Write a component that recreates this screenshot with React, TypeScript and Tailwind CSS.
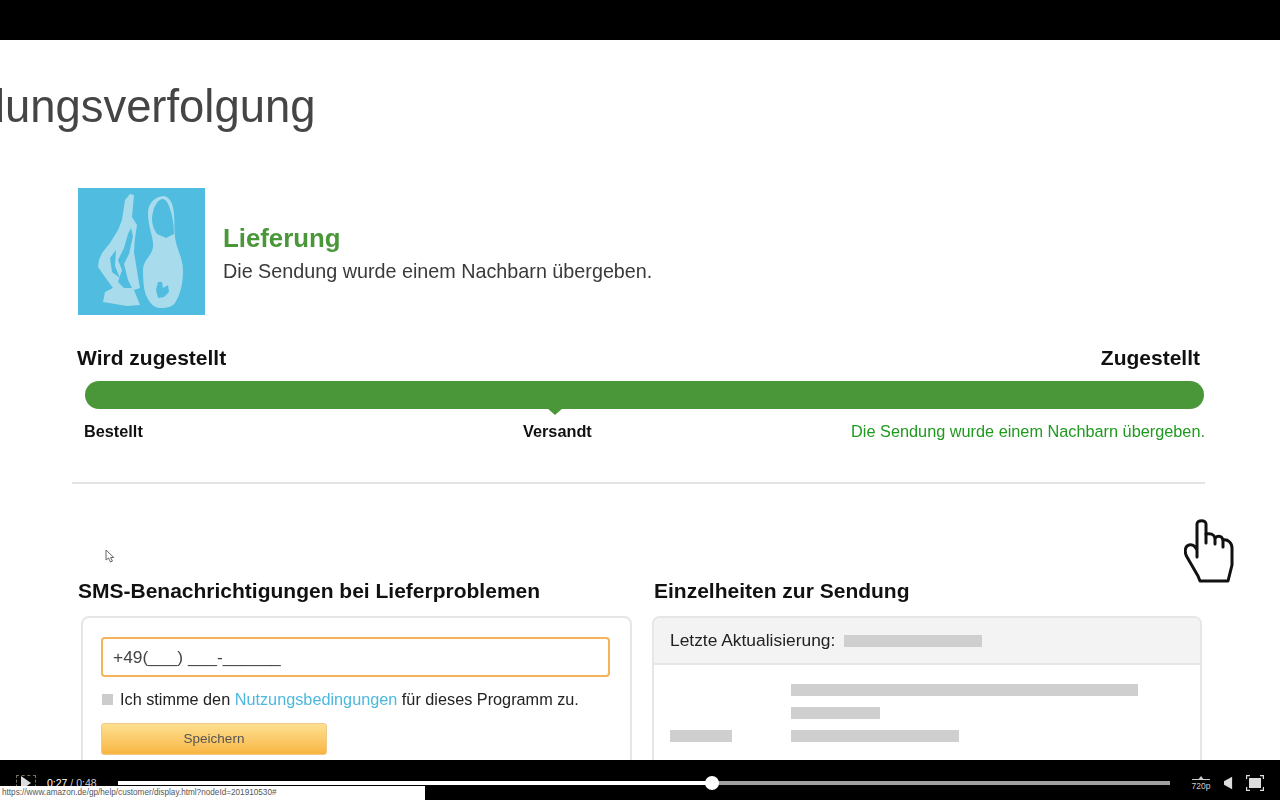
const Bar = ({ className }: { className: string }) => <div className={`h-3 bg-[#cfcfcf] ${className}`} />;

const Shoes = () => (
  <svg viewBox="0 0 127 127" className="h-full w-full">
    <path
      fill="#a8dcec"
      d="M52 6 L56 7 L54 29 L59 37 L57 50 L56 64 L60 89 L62 100 L56 102 L62 117 L49 118 L25 114 L27 104 L35 100 L27 89 L20 79 L21 72 L24 65 L32 55 L40 42 L44 32 L47 12 Z"
    />
    <path
      fill="#4fbce0"
      d="M53 40 L55 48 L51 66 L46 76 L50 92 L54 100 L46 100 L40 94 L44 82 L40 72 L46 60 L50 46 Z M32 70 L38 62 L37 78 L42 90 L34 84 Z"
    />
    <path
      fill="#a8dcec"
      d="M85 8 C76 9 70 16 70 25 C70 40 76 50 75 59 C74 68 65 72 65 82 C65 94 66 104 69 109 C72 116 77 120 82 120 C90 120 95 118 97 115 C103 105 105 95 105 82 C105 70 98 60 97 49 C96 38 97 28 95 19 C93 12 90 8 85 8 Z"
    />
    <path
      fill="#4fbce0"
      d="M84 11 C79 12 75 20 74 30 C74 38 77 43 79 46 L88 50 L96 46 C96 36 94 26 91 18 C89 13 87 11 84 11 Z M80 94 L84 94 L85 100 L90 97 L91 104 L86 109 L80 110 L78 102 Z"
    />
  </svg>
);

const Hand = () => (
  <svg viewBox="0 0 50 66" className="h-[66px] w-[50px]" fill="#fff" stroke="#111" strokeWidth="3" strokeLinejoin="round" strokeLinecap="round">
    <path d="M13 38 L13 5 C13 0.5 22 0.5 22 5 L22 15 C26 14 30 15 31 19 C34 16 38 17 39 21 C44 20 48 24 48 29 L48 46 L44 62 L16 62 L14 57 L3 38 C0 33 1 27 5 26 C8 25 11 27 13 31" />
    <path d="M22 15 L22 24 M31 19 L31 25 M39 21 L39 28" fill="none" />
  </svg>
);

const Cursor = () => (
  <svg viewBox="0 0 10 14" className="h-[14px] w-[10px]" fill="#fff" stroke="#666" strokeWidth="1">
    <path d="M1 1 L1 11 L3.5 9 L5.5 13 L7.5 12 L5.5 8.5 L8.8 8.5 Z" />
  </svg>
);

const Controls = () => (
  <div className="flex h-10 shrink-0 items-center bg-black pl-4 pt-[6px] text-[#cccccc]">
    <div className="flex h-[17px] w-5 shrink-0 items-center justify-center border border-dashed border-[#77705a]">
      <svg viewBox="0 0 12 14" className="h-3.5 w-3">
        <path d="M1 0 L11 7 L1 14 Z" fill="#ddd" />
      </svg>
    </div>
    <div className="ml-[11px] w-[71px] shrink-0 text-[10.5px] leading-none">
      <span className="text-white">0:27</span> / 0:48
    </div>
    <div className="relative flex h-1 w-[1052px] shrink-0 bg-[#a0a0a0]">
      <div className="w-[594px] bg-white" />
      <div className="absolute left-[587px] top-[-5px] h-3.5 w-3.5 rounded-full bg-white" />
    </div>
    <div className="ml-[21px] flex w-5 shrink-0 flex-col items-center">
      <svg viewBox="0 0 20 5" className="h-[5px] w-[19px]">
        <path d="M0 4 H19 V5 H0 Z M7 4 L9.5 1 L12 4 Z" fill="#ccc" />
      </svg>
      <span className="mt-0.5 text-[8.5px] leading-[9px]">720p</span>
    </div>
    <svg viewBox="0 0 10 14" className="ml-[13px] h-[14px] w-[9px] shrink-0">
      <path d="M0 5 L9 0 V14 L0 9 Z" fill="#ddd" />
    </svg>
    <svg viewBox="0 0 18 16" className="ml-[13px] h-4 w-[18px] shrink-0" fill="none" stroke="#ddd" strokeWidth="1.2">
      <rect x="3" y="3" width="12" height="10" fill="#ddd" stroke="none" />
      <path d="M0.6 4 V0.6 H4 M14 0.6 H17.4 V4 M17.4 12 V15.4 H14 M4 15.4 H0.6 V12" />
    </svg>
  </div>
);

export default function App() {
  return (
    <div className="relative flex h-[800px] w-[1280px] flex-col overflow-hidden bg-black font-['Liberation_Sans',Arial,sans-serif]">
      <div className="h-10 shrink-0" />

      <main className="relative h-[720px] shrink-0 overflow-hidden bg-white pt-[37px] blur-[0.4px]">
        <h1 className="ml-[-101px] text-[45.4px] leading-[60px] text-[#454545]">Sendungsverfolgung</h1>

        <section className="ml-[78px] mt-[51px] flex items-center">
          <div className="h-[127px] w-[127px] bg-[#4fbce0]">
            <Shoes />
          </div>
          <div className="ml-[18px] pt-[3px]">
            <h2 className="text-[25.8px] font-bold leading-[30px] text-[#4a973a]">Lieferung</h2>
            <p className="mt-[6px] text-[19.75px] leading-[24px] text-[#3a3a3a]">Die Sendung wurde einem Nachbarn übergeben.</p>
          </div>
        </section>

        <section className="ml-[72px] mt-[31px] w-[1133px] border-b-2 border-[#e3e5e5] pb-[41px]">
          <div className="ml-[5px] flex w-[1123px] justify-between text-[21px] font-bold leading-6 text-[#111]">
            <span>Wird zugestellt</span>
            <span>Zugestellt</span>
          </div>
          <div className="relative ml-[13px] mt-[11px] h-[28px] w-[1119px] rounded-full bg-[#4a973a]">
            <div className="absolute left-[462px] top-[27px] h-0 w-0 border-x-[8px] border-t-[7px] border-x-transparent border-t-[#4a973a]" />
          </div>
          <div className="ml-[12px] mt-[12px] grid grid-cols-[439px_1fr_auto] text-[16.3px] leading-5">
            <span className="font-bold text-[#111]">Bestellt</span>
            <span className="font-bold text-[#111]">Versandt</span>
            <span className="text-[#1f9a1f]">Die Sendung wurde einem Nachbarn übergeben.</span>
          </div>
        </section>

        <section className="mt-[94px] grid grid-cols-[553px_553px] gap-x-[23px] pl-[78px]">
          <div>
            <h3 className="text-[21px] font-bold leading-[26px] text-[#111]">SMS-Benachrichtigungen bei Lieferproblemen</h3>
            <div className="ml-[3px] mt-[12px] h-[300px] w-[551px] rounded-lg border-2 border-[#e6e6e6] pl-[18px] pt-[19px]">
              <div className="flex h-[40px] w-[509px] items-center rounded border-2 border-[#f3b45a] pl-[10px] text-[17.4px] text-[#444]">
                +49(___) ___-______
              </div>
              <div className="mt-[12px] flex h-5 items-center text-[16.25px] text-[#222]">
                <div className="ml-px h-[11px] w-[11px] bg-[#cccccc]" />
                <span className="ml-[7px]">
                  Ich stimme den <span className="text-[#4db8de]">Nutzungsbedingungen</span> für dieses Programm zu.
                </span>
              </div>
              <button
                type="button"
                className="mt-[14px] h-[32px] w-[226px] rounded-[3px] border border-[#f0c98a] bg-gradient-to-b from-[#fde08f] to-[#f8b540] text-[13.5px] text-[#555]"
              >
                Speichern
              </button>
            </div>
          </div>

          <div>
            <h3 className="text-[21px] font-bold leading-[26px] text-[#111]">Einzelheiten zur Sendung</h3>
            <div className="ml-[-2px] mt-[12px] h-[300px] w-[550px] rounded-lg border-2 border-[#e6e6e6]">
              <div className="flex h-[47px] items-center rounded-t-md border-b-2 border-[#e6e6e6] bg-[#f3f3f3] pl-[16px] text-[17.4px] text-[#222]">
                Letzte Aktualisierung:
                <Bar className="ml-[9px] w-[138px]" />
              </div>
              <div className="grid grid-cols-[121px_1fr] gap-y-[11px] pl-[16px] pt-[19px]">
                <div />
                <Bar className="w-[347px]" />
                <div />
                <Bar className="w-[89px]" />
                <Bar className="w-[62px]" />
                <Bar className="w-[168px]" />
              </div>
            </div>
          </div>
        </section>

        <div className="absolute left-[1184px] top-[479px]">
          <Hand />
        </div>
        <div className="absolute left-[105px] top-[509px]">
          <Cursor />
        </div>
      </main>

      <Controls />

      <div className="absolute bottom-0 left-0 flex h-[14px] w-[425px] items-center bg-white pl-[2px] text-[8.2px] text-[#555]">
        https://www.amazon.de/gp/help/customer/display.html?nodeId=201910530#
      </div>
    </div>
  );
}
